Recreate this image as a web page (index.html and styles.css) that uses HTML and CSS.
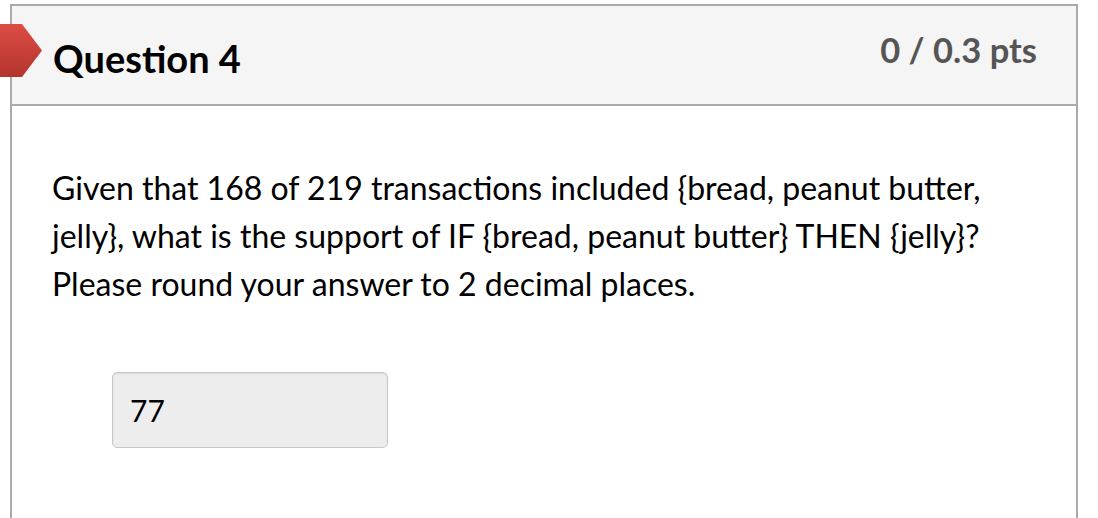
FILE: index.html
```html
<!DOCTYPE html>
<html>
<head>
<meta charset="utf-8">
<link rel="stylesheet" href="styles.css">
</head>
<body>
<div class="card">
  <div class="flag"></div>
  <div class="header">
    <h2 class="title">Question 4</h2>
    <div class="points">0 / 0.3 pts</div>
  </div>
  <div class="content">
    <p class="text">Given that 168 of 219 transactions included {bread, peanut butter, jelly}, what is the support of IF {bread, peanut butter} THEN {jelly}? Please round your answer to 2 decimal places.</p>
    <div class="answer">77</div>
  </div>
</div>
</body>
</html>
```
FILE: styles.css
```css
html, body {
  margin: 0;
  padding: 0;
  background: #fff;
  font-family: Lato, "Open Sans", sans-serif;
  color: #000;
  overflow: hidden;
}

.card {
  position: relative;
  margin: 4px 0 0 10px;
  width: 1064px;
  height: 600px;
  border: 2px solid #aaaaaa;
  border-bottom: none;
}

.flag {
  position: absolute;
  left: -12px;
  top: 18px;
  width: 42px;
  height: 53px;
  background: linear-gradient(#dc4d45, #b3342d);
  clip-path: polygon(0 0, 22px 0, 42px 26.5px, 22px 53px, 0 53px);
}

.header {
  display: flex;
  justify-content: space-between;
  align-items: flex-start;
  height: 98px;
  background: #f5f5f5;
  border-bottom: 2px solid #aaaaaa;
  padding: 0 39px 0 41px;
}

.title {
  margin: 30px 0 0;
  font-size: 38px;
  line-height: 1.2;
  font-weight: 700;
  color: #000;
}

.points {
  margin-top: 23px;
  font-size: 34.5px;
  line-height: 1.2;
  font-weight: 700;
  color: #555;
}

.content {
  padding: 58px 40px 0 40px;
}

.text {
  margin: 0;
  font-size: 32px;
  line-height: 48px;
  max-width: 950px;
}

.answer {
  margin: 64px 0 0 60px;
  width: 276px;
  height: 76px;
  box-sizing: border-box;
  border: 1px solid #c8c8c8;
  border-radius: 5px;
  background: #ededed;
  box-shadow: inset 0 1px 2px rgba(0,0,0,0.08);
  padding: 0 17px;
  display: flex;
  align-items: center;
  font-size: 30px;
}
```
